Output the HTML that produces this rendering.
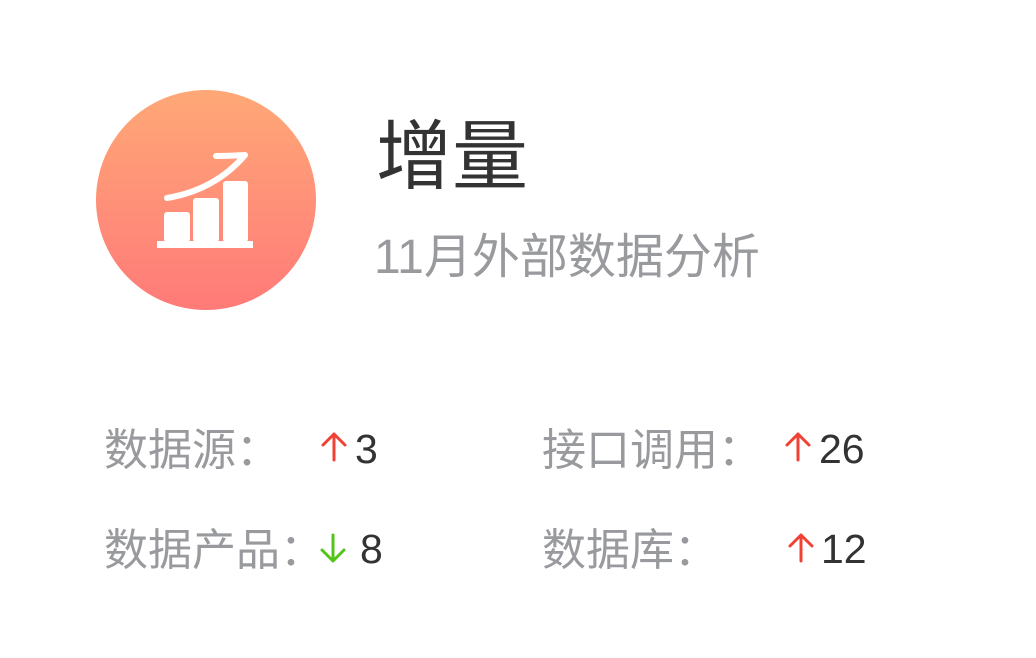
<!DOCTYPE html>
<html><head><meta charset="utf-8"><style>
body{margin:0;width:1036px;height:658px;background:#fff;position:relative;overflow:hidden;font-family:"Liberation Sans","Noto Sans CJK SC",sans-serif}
.c{position:absolute;left:96px;top:90px;width:220px;height:220px;border-radius:50%;background:linear-gradient(#ffa877,#ff7a78)}
.t{position:absolute;white-space:nowrap;line-height:1}
.l{color:#999a9e;font-size:44px}
.n{color:#333;font-size:41px}
</style></head><body>
<div class="c"></div>
<svg style="position:absolute;left:0;top:0" width="1036" height="658">
<g fill="#fff">
<rect x="157" y="241" width="96" height="7"/>
<rect x="164" y="212" width="26" height="30" rx="3"/>
<rect x="193" y="198" width="26" height="44" rx="3"/>
<rect x="223" y="181" width="25" height="61" rx="3"/>
</g>
<path d="M167 198 Q215 190 245 155 Q230 156 216 156" fill="none" stroke="#fff" stroke-width="6" stroke-linecap="round" stroke-linejoin="round"/>
<g fill="none" stroke-width="3" stroke-linecap="round" stroke-linejoin="round">
<path d="M334 460V434M323 445L334 434L345 445" stroke="#f04134"/>
<path d="M798 460V434M787 445L798 434L809 445" stroke="#f04134"/>
<path d="M801 561V535M790 546L801 535L812 546" stroke="#f04134"/>
<path d="M333 535V561M322 550L333 561L344 550" stroke="#52c41a"/>
</g>
</svg>
<div class="t" style="left:376px;top:120px;font-size:76px;color:#333">增量</div>
<div class="t" style="left:374px;top:234px;font-size:48px;color:#999a9e">11月外部数据分析</div>
<div class="t l" style="left:104px;top:429px">数据源：</div>
<div class="t n" style="left:355px;top:429px">3</div>
<div class="t l" style="left:542px;top:429px">接口调用：</div>
<div class="t n" style="left:819px;top:429px">26</div>
<div class="t l" style="left:104px;top:529px">数据产品：</div>
<div class="t n" style="left:360px;top:529px">8</div>
<div class="t l" style="left:542px;top:529px">数据库：</div>
<div class="t n" style="left:821px;top:529px">12</div>
</body></html>
